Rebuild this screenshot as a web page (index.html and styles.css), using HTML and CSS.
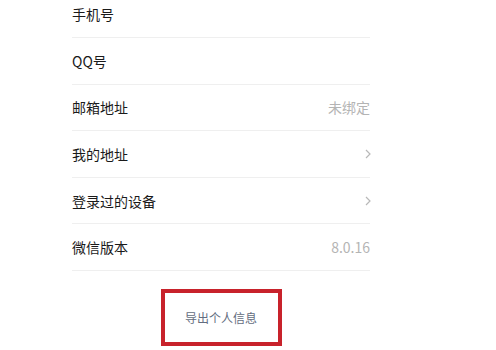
FILE: index.html
```html
<!DOCTYPE html>
<html lang="zh-CN">
<head>
<meta charset="utf-8">
<link rel="stylesheet" href="styles.css">
</head>
<body>
<div class="list">
  <div class="row"><span class="label">手机号</span><span class="value"></span></div>
  <div class="row"><span class="label">QQ号</span><span class="value"></span></div>
  <div class="row"><span class="label">邮箱地址</span><span class="value">未绑定</span></div>
  <div class="row"><span class="label">我的地址</span><svg class="chev" width="6" height="10" viewBox="0 0 6 10"><polyline points="1,1 5,5 1,9" fill="none" stroke="#b8b8b8" stroke-width="1.2"/></svg></div>
  <div class="row"><span class="label">登录过的设备</span><svg class="chev" width="6" height="10" viewBox="0 0 6 10"><polyline points="1,1 5,5 1,9" fill="none" stroke="#b8b8b8" stroke-width="1.2"/></svg></div>
  <div class="row"><span class="label">微信版本</span><span class="value">8.0.16</span></div>
  <div class="export-wrap">
    <div class="export">导出个人信息</div>
  </div>
</div>
</body>
</html>
```
FILE: styles.css
```css
html, body {
  margin: 0;
  padding: 0;
  background: #ffffff;
  overflow: hidden;
}
body {
  font-family: "Noto Sans CJK SC", "Noto Sans", sans-serif;
  width: 496px;
  height: 350px;
}
.list {
  margin-left: 72px;
  width: 298px;
  margin-top: -8.6px;
}
.row {
  height: 45.6px;
  border-bottom: 1px solid #efefef;
  display: flex;
  align-items: center;
  justify-content: space-between;
  box-sizing: content-box;
}
.row .label {
  font-size: 14px;
  color: #1a1a1a;
  line-height: 20px;
}
.row .value {
  font-size: 14px;
  color: #b4b4b4;
  line-height: 20px;
}
.chev {
  margin-right: -1px;
  display: block;
}
.export-wrap {
  display: flex;
  justify-content: center;
  padding-top: 18px;
}
.export {
  width: 113px;
  height: 49px;
  border: 4px solid #c8222b;
  display: flex;
  align-items: center;
  justify-content: center;
  font-size: 12px;
  color: #636d80;
  box-sizing: content-box;
}
```
